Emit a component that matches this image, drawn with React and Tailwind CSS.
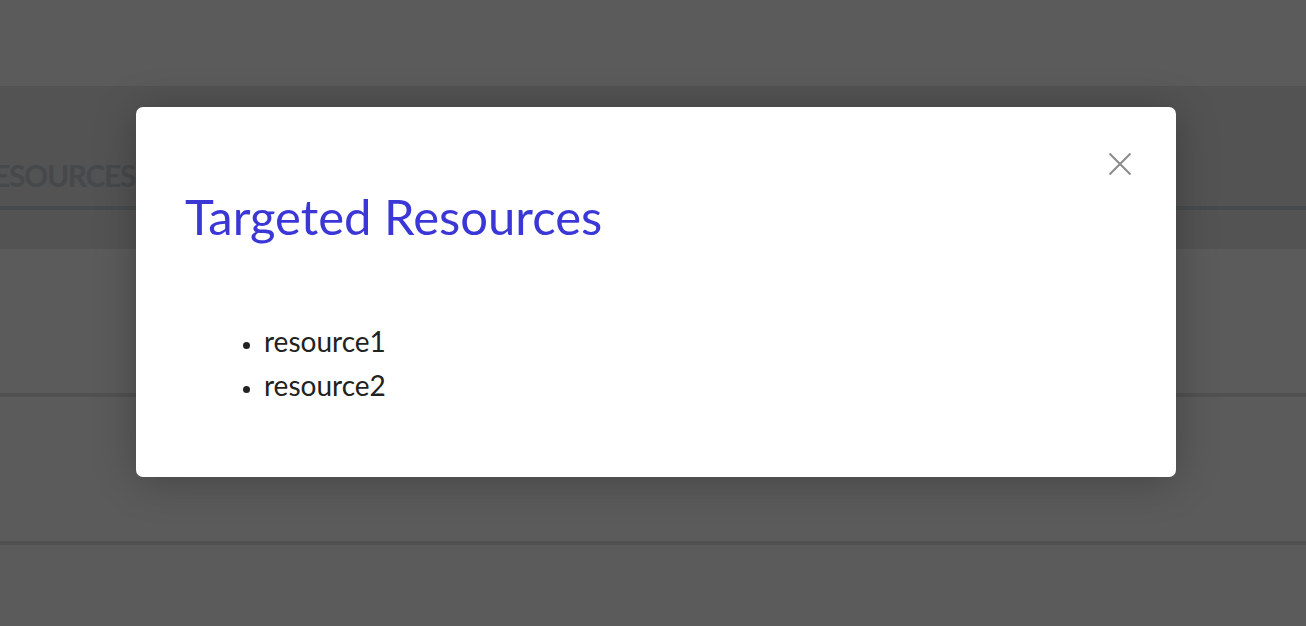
const ROWS = [0, 1];

function CloseIcon() {
  return (
    <svg width="24" height="24" viewBox="0 0 24 24" fill="none" stroke="currentColor" strokeWidth="2">
      <path d="M1.5 1.5 22.5 22.5M22.5 1.5 1.5 22.5" />
    </svg>
  );
}

export default function App() {
  return (
    <div className="relative h-[626px] w-[1306px] overflow-hidden bg-white font-['Lato',sans-serif]">
      {/* Page behind the modal */}
      <header className="h-[86px] bg-white" />
      <div className="flex h-[163px] flex-col bg-[#e7e8e9]">
        <div className="flex h-[120px] items-end pb-[16px]">
          {/* tab label, its start runs off the left edge */}
          <div className="flex w-[135px] justify-end">
            <span className="shrink-0 whitespace-nowrap text-[30px] font-bold leading-none tracking-[-0.045em] text-[#c3ccd2]">
              RESOURCES
            </span>
          </div>
        </div>
        <div className="h-[4px] bg-[#c4d2da]" />
      </div>
      <div className="flex flex-col">
        {ROWS.map((r) => (
          <div key={r} className="h-[148px] border-b-[4px] border-[#e3e3e3]" />
        ))}
      </div>

      {/* Overlay */}
      <div className="absolute inset-0 flex justify-center bg-[rgba(0,0,0,0.643)] pl-[6px] pt-[107px]">
        <div className="flex h-[370px] w-[1040px] flex-col rounded-[7px] bg-white pl-[49px] pr-[44px] pt-[45px] shadow-[0_4px_40px_rgba(0,0,0,0.25)]">
          <div className="flex justify-end">
            <button className="text-[#8a8a8a]">
              <CloseIcon />
            </button>
          </div>
          <h2 className="mt-[16px] text-[49px] font-normal leading-none text-[#3b37d6]">
            Targeted Resources
          </h2>
          <ul className="mt-[78px] list-disc pl-[79px] text-[28px] leading-[44px] text-[#222222] marker:text-[22px]">
            <li>resource1</li>
            <li>resource2</li>
          </ul>
        </div>
      </div>
    </div>
  );
}
